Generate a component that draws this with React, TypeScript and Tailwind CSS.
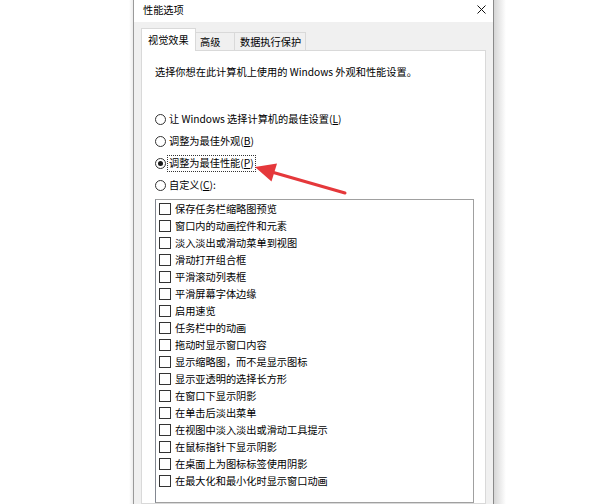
import React from "react";

const items = [
  "保存任务栏缩略图预览",
  "窗口内的动画控件和元素",
  "淡入淡出或滑动菜单到视图",
  "滑动打开组合框",
  "平滑滚动列表框",
  "平滑屏幕字体边缘",
  "启用速览",
  "任务栏中的动画",
  "拖动时显示窗口内容",
  "显示缩略图，而不是显示图标",
  "显示亚透明的选择长方形",
  "在窗口下显示阴影",
  "在单击后淡出菜单",
  "在视图中淡入淡出或滑动工具提示",
  "在鼠标指针下显示阴影",
  "在桌面上为图标标签使用阴影",
  "在最大化和最小化时显示窗口动画",
];

function Radio({
  checked,
  focus,
  children,
}: {
  checked?: boolean;
  focus?: boolean;
  children: React.ReactNode;
}) {
  return (
    <div className="flex items-center h-[22px]">
      <div className="w-[11px] h-[11px] rounded-full border border-[#333333] bg-white flex items-center justify-center shrink-0">
        {checked && <div className="w-[5px] h-[5px] rounded-full bg-[#1a1a1a]" />}
      </div>
      <span
        className={
          "ml-[1px] h-[17px] px-[1px] inline-flex items-center border border-dotted " +
          (focus ? "border-[#333333]" : "border-transparent")
        }
      >
        {children}
      </span>
    </div>
  );
}

export default function App() {
  return (
    <div className="relative w-[600px] h-[504px] overflow-hidden bg-white flex font-['Noto_Sans_CJK_SC','Noto_Sans',sans-serif] text-[10.2px] leading-[14px] text-black">
      <div className="w-[129px] shrink-0" />
      <div className="w-[4px] shrink-0 bg-gradient-to-r from-white to-[#ededed]" />
      {/* dialog */}
      <div className="w-[361px] shrink-0 h-full border-l border-r border-l-[#9a9a9a] border-r-[#8a8a8a] bg-[#f0f0f0] flex flex-col">
        <div className="h-[22px] bg-white flex items-start justify-between pl-[9px] pr-[7px]">
          <span className="pt-[3px]">性能选项</span>
          <svg width="9" height="9" viewBox="0 0 9 9" className="mt-[5px]">
            <path d="M0.5 0.5 L8.5 8.5 M8.5 0.5 L0.5 8.5" stroke="#111" strokeWidth="1" />
          </svg>
        </div>
        <div className="flex-1 flex flex-col px-[7px] pt-[6px]">
          <div className="flex items-end h-[23px] -mb-px relative z-10">
            <div className="w-[55px] h-[23px] bg-white border-l border-t border-r border-[#d9d9d9] pl-[6px] pt-[4px]">
              视觉效果
            </div>
            <div className="w-[39px] h-[19px] bg-[#f0f0f0] border-t border-r border-b border-[#d9d9d9] pl-[4px] pt-[2px]">
              高级
            </div>
            <div className="w-[71px] h-[19px] bg-[#f0f0f0] border-t border-r border-b border-[#d9d9d9] pl-[5px] pt-[2px]">
              数据执行保护
            </div>
          </div>
          <div className="flex-1 bg-white border border-[#d9d9d9] flex flex-col pl-[13px] pr-[11px] pt-[14px] min-h-0">
            <div>选择你想在此计算机上使用的 Windows 外观和性能设置。</div>
            <div className="mt-[29px] flex flex-col">
              <Radio>
                让 Windows 选择计算机的最佳设置(<span className="underline">L</span>)
              </Radio>
              <Radio>
                调整为最佳外观(<span className="underline">B</span>)
              </Radio>
              <Radio checked focus>
                调整为最佳性能(<span className="underline">P</span>)
              </Radio>
              <Radio>
                自定义(<span className="underline">C</span>):
              </Radio>
            </div>
            <div className="mt-[3px] flex-1 border border-[#a0a0a0] border-l-[#828790] bg-white flex flex-col">
              {items.map((t) => (
                <div key={t} className="h-[17px] flex items-center pl-[3px] gap-[4px]">
                  <div className="w-[12px] h-[12px] border border-[#333333] bg-white shrink-0" />
                  <span>{t}</span>
                </div>
              ))}
            </div>
          </div>
        </div>
      </div>
      <div className="w-[12px] shrink-0 bg-gradient-to-r from-[#d6d6d6] to-white" />
      <div className="flex-1" />

      {/* red arrow annotation */}
      <svg
        className="absolute left-0 top-0 pointer-events-none"
        width="600"
        height="504"
        viewBox="0 0 600 504"
      >
        <line x1="345" y1="193" x2="270" y2="171.5" stroke="#e5383b" strokeWidth="3" strokeLinecap="round" />
        <polygon points="255,167 277,163.5 271.5,181.5" fill="#e5383b" />
      </svg>
    </div>
  );
}
